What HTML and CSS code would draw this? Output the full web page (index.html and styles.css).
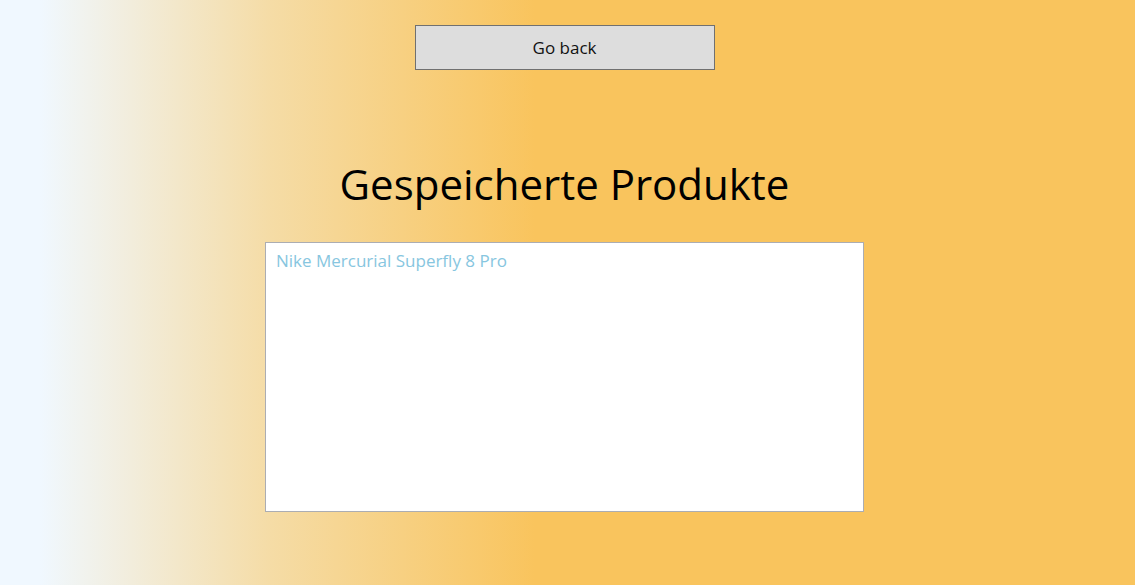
FILE: index.html
```html
<!DOCTYPE html>
<html lang="de">
<head>
<meta charset="utf-8">
<title>Gespeicherte Produkte</title>
<link rel="stylesheet" href="styles.css">
</head>
<body>
<main class="page">
  <button class="back-btn" type="button">Go back</button>
  <h1 class="title">Gespeicherte Produkte</h1>
  <ul class="product-list">
    <li class="product-item">Nike Mercurial Superfly 8 Pro</li>
  </ul>
</main>
</body>
</html>
```
FILE: styles.css
```css
html, body {
  margin: 0;
  padding: 0;
  height: 100%;
}
body {
  background: linear-gradient(to right, #F0F8FF 0px, #F0F8FF 40px, #F5DCA6 270px, #F9C45D 535px, #F9C45D 100%);
  font-family: "Open Sans", "Noto Sans", sans-serif;
  overflow: hidden;
}
.page {
  display: flex;
  flex-direction: column;
  align-items: center;
  padding: 25px 6px 0 0;
  box-sizing: border-box;
  height: 585px;
}
.back-btn {
  width: 300px;
  height: 45px;
  background: #DDDDDD;
  border: 1px solid #707070;
  font-family: "Open Sans", sans-serif;
  font-size: 17px;
  color: #111;
  padding: 0;
  margin: 0;
}
.title {
  margin: 86px 0 0 0;
  font-weight: 400;
  font-size: 42px;
  line-height: 56px;
  color: #000;
}
.product-list {
  list-style: none;
  margin: 30px 0 0 0;
  padding: 6px 10px;
  width: 599px;
  height: 270px;
  box-sizing: border-box;
  background: #fff;
  border: 1px solid #ABADB3;
}
.product-item {
  color: #87C6E0;
  font-size: 17px;
  line-height: 24px;
}
```
